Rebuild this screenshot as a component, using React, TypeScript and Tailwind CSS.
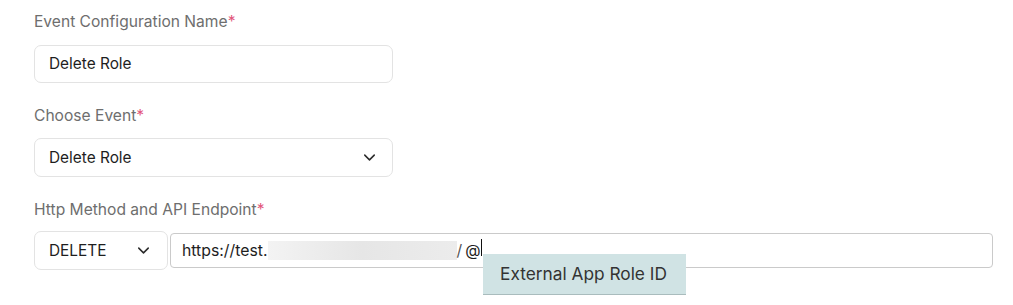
import React from 'react';
import { ChevronDown } from 'lucide-react';

const Label: React.FC<{ text: string }> = ({ text }) => (
  <label className="block text-[15.6px] leading-5 text-[#6e6e6e]">
    {text}
    <span className="text-[#e2557a]">*</span>
  </label>
);

export default function App() {
  return (
    <div className="w-[1013px] h-[305px] bg-white overflow-hidden font-['Inter','Liberation_Sans',sans-serif] pt-[12px] pl-[34px]">
      {/* Event configuration name */}
      <Label text="Event Configuration Name" />
      <div className="mt-[13px] w-[359px] h-[38px] border border-[#e3e3e3] rounded-[7px] flex items-center px-[14px] text-[15.4px] text-[#1e1e1e]">
        Delete Role
      </div>

      {/* Choose event */}
      <div className="mt-[23px]">
        <Label text="Choose Event" />
      </div>
      <div className="mt-[12px] w-[359px] h-[39px] border border-[#e3e3e3] rounded-[7px] flex items-center justify-between pl-[14px] pr-[13px] text-[15.4px] text-[#1e1e1e]">
        <span>Delete Role</span>
        <ChevronDown className="w-[19px] h-[19px] text-[#2a2a2a]" strokeWidth={1.9} />
      </div>

      {/* Http method and endpoint */}
      <div className="mt-[23px]">
        <Label text="Http Method and API Endpoint" />
      </div>
      <div className="mt-[11px] flex items-center gap-[2px]">
        <div className="w-[134px] h-[39px] border border-[#e3e3e3] rounded-[7px] flex items-center justify-between pl-[14px] pr-[14px] text-[15.4px] text-[#1e1e1e]">
          <span>DELETE</span>
          <ChevronDown className="w-[19px] h-[19px] text-[#2a2a2a]" strokeWidth={1.9} />
        </div>
        <div className="relative w-[823px] h-[35px] border border-[#cacaca] rounded-[4px] flex items-center pl-[11px] text-[15.8px] text-[#1e1e1e]">
          <span>https://test.</span>
          <span className="inline-block w-[189px] h-[19px] bg-gradient-to-r from-[#f3f3f3] via-[#e6e6e6] to-[#ececec]" />
          <span className="text-[#555]">/</span>
          <span className="ml-[3px]">@</span>
          <span className="inline-block w-px h-[17px] bg-[#111] -translate-y-[3px]" />
          <div className="absolute left-[312px] top-[20px] w-[203px] h-[41px] bg-[#d0e3e4] border-b border-[#a9bcbd] flex items-center pl-[17px] text-[17.3px] text-[#333]">
            External App Role ID
          </div>
        </div>
      </div>
    </div>
  );
}
